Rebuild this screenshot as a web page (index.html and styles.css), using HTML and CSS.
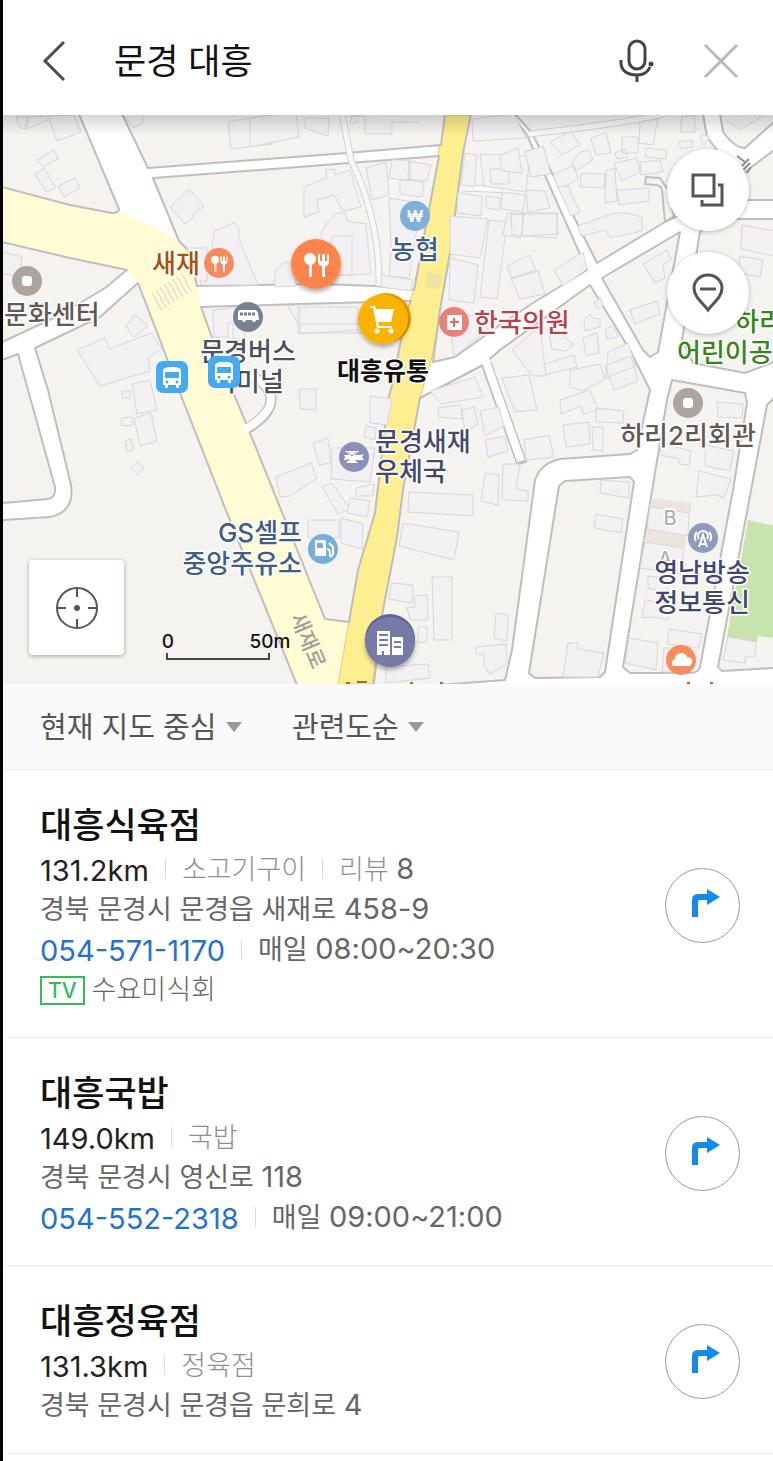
FILE: index.html
```html
<!DOCTYPE html>
<html lang="ko">
  <head>
    <meta charset="UTF-8" />
    <meta name="viewport" content="width=device-width, initial-scale=1.0" />
    <title>문경 대흥 - 지도 검색</title>
    <link rel="stylesheet" href="styles.css">
  </head>
  <body>
    <header class="search-bar">
      <button type="button" class="icon-button" aria-label="뒤로">
        <svg width="24" height="42" viewBox="0 0 24 42"><path d="M23 2L4 21l19 19" fill="none" stroke="#4b4b52" stroke-width="3" /></svg>
      </button>
      <input class="search-input" type="text" aria-label="검색어" value="문경 대흥" />
      <button type="button" class="icon-button" aria-label="음성 검색">
        <svg width="36" height="44" viewBox="0 0 36 44" fill="none" stroke="#444" stroke-width="3">
          <rect x="10" y="2" width="16" height="28" rx="8" />
          <path d="M2 21v3c0 8 7 12 16 12 6 0 11-3 13-8M18 36v7" />
          <circle cx="32" cy="25" r="2.5" fill="#444" stroke="none" />
        </svg>
      </button>
      <button type="button" class="icon-button close" aria-label="지우기">
        <svg width="36" height="36" viewBox="0 0 36 36"><path d="M2 2l32 32M34 2L2 34" fill="none" stroke="#b9b9b9" stroke-width="3" /></svg>
      </button>
    </header>

    <section class="map">
      <svg class="map-canvas" viewBox="3 115 770 569">
        <defs>
          <linearGradient id="topShade" x1="0" y1="0" x2="0" y2="1">
            <stop offset="0" stop-color="#000" stop-opacity=".16" />
            <stop offset="1" stop-color="#000" stop-opacity="0" />
          </linearGradient>
          <filter id="pinShadow" x="-20%" y="-20%" width="140%" height="150%">
            <feDropShadow dx="0" dy="3" stdDeviation="2" flood-opacity=".3" />
          </filter>
          <g id="food">
            <circle cx="-6" cy="-5" r="6" />
            <path d="M-7-2h3v15h-3z" />
            <path d="M2-10h2v7h2v-7h3v7h2v-7h2v7c0 4-2 5-4 5v11H6V2C4 2 2 1 2-3z" />
          </g>
          <g id="busStop">
            <rect x="-16" y="-16" width="32" height="32" rx="7" fill="#46aaf0" />
            <path d="M-9-6c0-3 3-4 9-4s9 1 9 4V8H7v3H4V8H-4v3h-3V8h-2z" fill="#fff" />
            <path d="M-7-5H7V1H-7z" fill="#46aaf0" />
            <circle cx="-5" cy="5" r="1.5" fill="#46aaf0" />
            <circle cx="5" cy="5" r="1.5" fill="#46aaf0" />
          </g>
        </defs>

        <rect x="3" y="115" width="770" height="569" fill="#fff" />

        <!-- 큰 도로 -->
        <path class="road-light" d="M3 187L70 205 112 213 119 211 150 225 179 241 188 250 201 307 220 360 250 433 325 619 349 622 336 684H297L180 393 138 283 127 270 3 242z" />
        <path class="road-main" d="M444 115H471L463 153 450 253 440 310 432 357 420 398 403 490 397 537 383 610 372 684H338L349 622 358 570 375 513 388 400 407 310 415 287 438 157z" />
        <path d="M427 272l15 2-3 15-14-2z" fill="#efe3a0" />
        <path d="M154 298l33-22M158 306l33-21" stroke="#e9e4ce" stroke-width="11" stroke-dasharray="2 3" />

        <!-- 블록 -->
        <g class="block">
          <path d="M2 114H79L119 209Q119 213 112 213L70 205 2 187z" />
          <path d="M122 114L148 168 347 153 441 145 445 114z" />
          <path d="M153 178L260 170 439 156 414 290 375 286 320 284 197 286 193 268 188 250 179 241z" />
          <path d="M201 307L300 304 411 301 407 310 392 385 388 400 375 513 358 570 349 622 325 619 250 433 220 360z" />
          <path d="M2 242L70 258 127 270 105 288 60 315 2 342z" />
          <path d="M138 283L100 317 35 348 48 390 71 485Q75 512 50 517L2 520V685H297L227 513 180 393 160 340z" />
          <path d="M2 360L18 354 28 390 55 487Q56 498 48 499L2 503z" />
          <path d="M471 114H511L527 135 587 270 533 303 500 325 455 357 433 362 440 310 450 253 463 153z" />
          <path d="M420 398L483 365 500 350 590 285 630 350 650 390 637 450 630 454 560 459Q541 463 535 480L512 650 505 680 373 690 383 610 397 537 403 490z" />
          <path d="M515 114H703L707 137 717 150 700 180 680 215 665 222 662 190Q661 185 655 185L645 184 646 177 660 178 668 190 674 216 665 222 597 263 532 133z" />
          <path d="M602 278L680 232 658 352 650 357 643 350z" />
          <path d="M700 232L712 219H774V362L745 373 693 363 682 340z" />
          <path d="M720 114L723 132Q735 148 745 148L774 122V114z" />
          <path d="M774 150L745 172 738 200H774z" />
          <path d="M672 380L745 393 747 403 733 490 700 667Q698 673 690 673H630L623 667 667 400z" />
          <path d="M774 398L767 405 718 667 722 671 774 668z" />
          <path d="M565 481L630 477 634 482 605 672 600 677 535 678 529 673 559 486z" />
        </g>
        <path d="M748 520L774 526V638L758 636 757 642 727 637z" fill="#c7e4ac" />
        <path d="M652 498l40 5-1 10-41-6zM647 530l39 6-1 12-41-7z" fill="#ebe5de" />

        <!-- 골목길 -->
        <g class="alley">
          <path class="edge" d="M486 363L522 464M248 428Q272 414 271 398 269 383 250 376" />
          <path class="fill" d="M485 359L521 461M244 430Q272 414 271 398 269 383 250 376" />
          <path class="edge soft" d="M342 114L351 160Q380 220 379 286M529 134Q620 124 664 114M463 188L510 190" />
          <path class="fill soft" d="M342 114L351 160Q380 220 379 286M529 134Q620 124 664 114M463 188L510 190" />
        </g>

        <!-- 건물 -->
        <g class="building">
          <path d="M16 117l3 10 6 2 2-12zM28 117l-1 12 22-10 8 22 24-9-7-17zM37 160l17-10 4 9-15 8zM35 174l9-6 12 20-10 4zM58 186l17-8 5 10-16 9z" />
          <path d="M125 117l9 11 9-5-1-8M228 122l44-8v30l-41 5zM170 207l19-18 15 17-10 8v3l-9 7zM214 231l20-8 5 6v10l19 46h-57l-3-20h12z" />
          <path d="M187 248h20v33h-8M3 252l19 5-2 19-17-2M126 326l9-12 13 12-14 11zM77 350l28-12 4 11 42-16 11 15-14 10 2 13-50 15zM132 384l18-4 7 30-20 4zM122 391h8v7h-8zM121 418l11-1 1 8-11 1zM134 418l17-5 6 28-17 5zM125 441l6-2 3 11-7 2zM131 468l6-6 7 6-6 7z" />
          <path d="M250 118l46-6 3 25-49 10zM305 118h24l-1 18-23-8zM350 115l15 1v18h27v-12h28M352 116h6v7h-8zM304 187l22-9v-8l9-1v6l15-5 11 37-18 4-9-16-17 5 2 12-15 5z" />
          <path d="M327 223l10-10 8 0 3 8 18 3 5 50-45 2-5-42zM332 236h20v39h-20zM366 168l20-6 3 33-17 5zM392 160h18v21l-21-3zM409 161l22 4-4 16-19-2zM400 179l24 3-2 15-22-3zM389 198l32 5-12 75-20-2 2-25zM381 275l32 5-2 11-30-4zM275 287v-17l10-8 11 2v22z" />
          <path d="M213 310l30-3 2 32h-12v-16h-5v14h-14zM288 306l10-1v19h74v9h-74v-9zM300 307h58v23l-58 4zM299 389h17v21l-16-1zM370 396l22 3-5 26-17-2zM366 426l10 2-1 12-11-3zM313 443l15-5 3 25-12 2zM276 477l35-14 6 15-27 18-10 1zM322 487l10-4 18 26-12 5z" />
          <path d="M332 448l43 0-5 34-39-3zM356 488l18-4-1 12h-17zM350 498l20 3-3 16-20-4zM308 520h31v18h-31zM341 518l22 6-1 25-21-6z" />
          <path d="M472 119l42-5 12 24-53 3zM465 153l12 2-3 32-13-2zM480 154l50 2-4 36-42-6zM490 169h19v15h-18zM458 193l24 3-1 20-24-3zM450 216l38 3-8 39-30-4zM489 220l18 2-10 77-17-2zM450 258l28 7-4 38-25-3z" />
          <path d="M486 196l14 2-1 12-13-2zM502 192l23 3-2 17-22-3zM526 190l19 1 5 17-22 4zM507 213l17 1-3 24-18-3zM523 213l34 0 1 21-36 2zM511 214h46v24l-45-3zM507 266l22-11 7 15-24 8zM511 279l27-8 7 23-25 5zM554 270l29-18 4 17-24 17z" />
          <path d="M450 326l28-14 10 17-34 28zM500 155l18-7 4 25-20-2zM525 152l18-6 8 28-20 3zM550 142l21-11 9 14-18 10zM553 175l21-10 4 14-19 11zM580 152l9-2 4 10-17 11-5-7zM591 138l15-5 5 20-15 2zM615 153l10-4 3 8-11 2zM640 122l18-3-5 26-14-2zM622 137h16v16h-16z" />
          <path d="M581 173l24 1-1 14-24-1zM606 171l9-3 2 33-12 2zM614 163l23-5 3 14-18 9zM640 162l20-2 3 12-22 3zM646 148l21 2-1 9-21-2zM617 190l32-2v13l-30 4zM679 142l13-2 1 7-12 2zM682 116h13v16h-15zM702 134l8 3-6 8-4-6zM558 187l10-1 12 26-9 4zM578 226l36-13 13 0 15 4v14l-32 7-4-8-25 6z" />
          <path d="M643 264l24-14 4 9-8 6 2 13-10 5zM630 310l27-9 3 13-25 10zM594 303l7-5 2 8-6 3zM584 320l6-6 3 4 7 1v8l-15 4zM605 329l9-3 4 11-11 2zM608 352l20-9 8 23-30 12zM583 338l14-5 2 20-13 3zM605 366l26-10 7 25-24 9zM548 328l10 3 16 14-8 6-14-2zM541 365l33-10 3 12-37 9zM570 370l30-6 5 15-22 12-13-4z" />
          <path d="M512 350l28-24 6 50-14 0zM502 378l27-3 8 35-22 2zM430 391l45-14 8 20-42 7zM438 408l23-3 1 14-23-2zM462 410l12-3 4 17-13 9zM480 411l19-4 5 19-19 10zM485 440l20-4 3 15-20 6z" />
          <path d="M409 492l64 3v21l-65-4zM403 523l56 9-5 28-55-14zM432 577h20v63h-18zM391 583l22 2-1 18-23-4zM414 596l13-1 1 25h-18l-3-13h8zM418 627h9v15l-9 1zM496 613l12 2-1 26-13-3zM476 647l30-3 1 20-17 10-6-8v-12h-8zM386 667l42-3 2 14-44 5z" />
          <path d="M485 473l14 2-1 30-17-4zM503 464h17l-4 25 12 2v10l-26-1zM563 425l26-3 1 22-24 3zM592 427h11v24l-10-1zM596 408l28 3-1 12-27-1zM524 440l25-5 5 22-28 3zM560 400l30-10 8 20-15 4-2-8-20 8z" />
          <path d="M601 480l28 2v16l-29-5zM596 514l27 5-2 14-27-5zM568 643h10v6l26 4-6 24-35 0zM717 402l26 2-1 14-24-1zM660 443l31 8-2 14-10-1v-5l-18-4zM699 471l32 8-7 19-8-3-20 2zM705 445l29 6-4 20-25-5zM650 507l39 6-1 23-41-7zM645 542l39 6-4 26-40-6z" />
          <path d="M648 576l20 2v15l-20-5zM645 600l26 4-3 16-13-3-13 1zM629 638l29 5-2 27-31-7zM669 629l33 5-3 14-32-4zM664 648h18v24h-20zM728 637l28 5-1 14-10 1v6l-22-3zM742 225l32 6v25l-33-7zM740 256l23 4-3 17-22-4zM726 120l14 10 23-14" />
        </g>

        <!-- 장소 이름 -->
        <g class="place">
          <text x="152" y="273" fill="#a8500c">새재</text>
          <text x="4" y="324" fill="#5f5955">문화센터</text>
          <text x="415" y="259" fill="#3d5f85" text-anchor="middle">농협</text>
          <text x="474" y="332" fill="#b8414a">한국의원</text>
          <text x="248" y="361" fill="#4c505a" text-anchor="middle">문경버스</text>
          <text x="248" y="391" fill="#4c505a" text-anchor="middle">터미널</text>
          <text x="375" y="451" fill="#45486e">문경새재</text>
          <text x="375" y="481" fill="#45486e">우체국</text>
          <text x="302" y="542" fill="#3d5f85" text-anchor="end">GS셀프</text>
          <text x="302" y="573" fill="#3d5f85" text-anchor="end">중앙주유소</text>
          <text x="688" y="445" fill="#5f5955" text-anchor="middle">하리2리회관</text>
          <text x="735" y="331" fill="#36861b">하리</text>
          <text x="677" y="362" fill="#36861b">어린이공</text>
          <text class="unit" x="670" y="525" text-anchor="middle">B</text>
          <text class="unit" x="665" y="566" text-anchor="middle">A</text>
          <text x="702" y="582" fill="#3f4575" text-anchor="middle">영남방송</text>
          <text x="702" y="612" fill="#3f4575" text-anchor="middle">정보통신</text>
          <text class="chosen" x="383" y="380" text-anchor="middle">대흥유통</text>
        </g>
        <text class="road-name" transform="translate(290 617) rotate(67)">새재로</text>
        <path d="M737 156l8 6M742 166l7-7M743 170l7-7M747 173l4-6" stroke="#8f8f8f" stroke-width="2" />

        <!-- 작은 아이콘 -->
        <g fill="#fff">
          <circle cx="27" cy="281" r="15" fill="#ada49f" />
          <rect x="22" y="276" width="10" height="10" rx="3" />
          <circle cx="688" cy="403" r="15" fill="#ada49f" />
          <rect x="683" y="398" width="10" height="10" rx="3" />

          <circle cx="219" cy="263" r="15" fill="#f58b5c" />
          <use href="#food" transform="translate(219 263) scale(.65)" />

          <circle cx="248" cy="317" r="15" fill="#78818f" />
          <path d="M238 312q0-2 2-2h15q2 0 3 3l1 7h-3a2 2 0 0 1-4 0h-6a2 2 0 0 1-4 0h-4z" />
          <path d="M240 314h16" stroke="#78818f" stroke-width="3" stroke-dasharray="3 1" />

          <circle cx="415" cy="216" r="15" fill="#7fb0dc" />
          <text class="won" x="415" y="222" text-anchor="middle">₩</text>

          <circle cx="454" cy="322" r="15" fill="#e98079" />
          <rect x="447" y="315" width="15" height="15" rx="1" />
          <path d="M454 318v9M450 322h9" stroke="#e06c66" stroke-width="2" />

          <circle cx="354" cy="457" r="15" fill="#8c8fb6" />
          <path d="M345 451h14l-4 4h5l4-1-2 3 2 3-5 0h-4l3 3h-12l4-4-6 1 1-3-1-2 5 0z" />
          <path d="M347 452l5 4 5-4" fill="none" stroke="#8c8fb6" stroke-width="1" />

          <circle cx="323" cy="549" r="15" fill="#75afd9" />
          <path d="M315 541q0-1 2-1h7q2 0 2 2v14h-11zM317 543v5h6v-5z" fill-rule="evenodd" />
          <path d="M327 549q3 0 3 5t3 0v-7l-4-4" fill="none" stroke="#fff" stroke-width="2" />

          <circle cx="703" cy="538" r="15" fill="#8f9ac0" />
          <path d="M699 547l4-12 4 12M700 544h6M699 539a5 5 0 1 1 8 0M696 541a8 8 0 0 1 1-9M710 541a8 8 0 0 0-1-9" fill="none" stroke="#fff" stroke-width="2" />

          <circle cx="681" cy="660" r="15" fill="#f68d5b" />
          <path d="M673 666q-3-5 2-7 0-5 6-6 5 0 6 4 6 0 5 6-1 3-4 3z" />
        </g>
        <use href="#busStop" x="172" y="377" />
        <use href="#busStop" x="224" y="372" />

        <!-- 검색 결과 핀 -->
        <g fill="#fff">
          <circle cx="316" cy="264" r="25" fill="#ff844c" filter="url(#pinShadow)" />
          <use href="#food" x="316" y="264" />

          <circle cx="386" cy="318" r="25" fill="#e29c00" />
          <circle cx="383" cy="319" r="25" fill="#fcb300" filter="url(#pinShadow)" />
          <path d="M370 306h5l1 3h18l-3 13h-13l1 4h13v2h-15l-4-20h-3z" />
          <circle cx="377" cy="331" r="2.5" />
          <circle cx="391" cy="331" r="2.5" />

          <circle cx="390" cy="639" r="25" fill="#626694" />
          <circle cx="390" cy="642" r="25" fill="#757aa6" filter="url(#pinShadow)" />
          <path d="M377 631h13v24h-13zM392 637h11v18h-11z" />
          <path d="M379 635h9M379 640h9M379 645h9M394 642h7M394 647h7M383 655v-4" stroke="#757aa6" stroke-width="2" />
        </g>
        <path d="M346 683h4M357 682h10M410 683h3M440 683h3M687 683h3M710 683h3" stroke="#a06a34" stroke-width="2" />

        <!-- 축척 -->
        <g class="scale">
          <text x="168" y="648" text-anchor="middle">0</text>
          <text x="270" y="648" text-anchor="middle">50m</text>
          <path d="M167 653v6h102v-6" />
        </g>
        <rect x="3" y="115" width="770" height="20" fill="url(#topShade)" />
      </svg>

      <div class="map-tools">
        <button type="button" class="round-button" aria-label="지도 유형">
          <svg width="34" height="34" viewBox="0 0 34 34" fill="none" stroke="#555" stroke-width="3"><path d="M2 2h21v21H2zM27 12h4v20H11v-5" /></svg>
        </button>
        <button type="button" class="round-button" aria-label="핀 숨기기">
          <svg width="34" height="40" viewBox="0 0 34 40" fill="none" stroke="#555" stroke-width="3"><path d="M17 37C12 30 3 24 3 15a14 13 0 0 1 28 0c0 9-9 15-14 22zM9 16h16" /></svg>
        </button>
      </div>
      <button type="button" class="locate-button" aria-label="현재 위치">
        <svg width="44" height="44" viewBox="0 0 44 44" fill="none" stroke="#555" stroke-width="2">
          <circle cx="22" cy="22" r="20" />
          <path d="M22 2v9M22 33v9M2 22h9M33 22h9" />
          <circle cx="22" cy="22" r="3" fill="#555" stroke="none" />
        </svg>
      </button>
    </section>

    <form class="filters">
      <div class="filter">
        <select aria-label="검색 기준">
          <option>현재 지도 중심</option>
        </select>
      </div>
      <div class="filter">
        <select aria-label="정렬">
          <option>관련도순</option>
        </select>
      </div>
    </form>

    <ul class="results">
      <li class="result">
        <div class="info">
          <h2>대흥식육점</h2>
          <p class="line"><span class="distance num">131.2km</span><span class="category">소고기구이</span><span class="category">리뷰 <b class="num">8</b></span></p>
          <p>경북 문경시 문경읍 새재로 <span class="num">458-9</span></p>
          <p class="line"><a class="num" href="tel:054-571-1170">054-571-1170</a><span>매일 <span class="num">08:00~20:30</span></span></p>
          <p class="tv"><em>TV</em>수요미식회</p>
        </div>
        <button type="button" class="route-button" aria-label="대흥식육점 길찾기">
          <svg width="34" height="32" viewBox="-6 0 34 32" fill="#128af0"><path d="M0 28V11q0-6 6-6h9V0l13 8-13 8v-5H8q-2 0-2 2v15z" /></svg>
        </button>
      </li>
      <li class="result">
        <div class="info">
          <h2>대흥국밥</h2>
          <p class="line"><span class="distance num">149.0km</span><span class="category">국밥</span></p>
          <p>경북 문경시 영신로 <span class="num">118</span></p>
          <p class="line"><a class="num" href="tel:054-552-2318">054-552-2318</a><span>매일 <span class="num">09:00~21:00</span></span></p>
        </div>
        <button type="button" class="route-button" aria-label="대흥국밥 길찾기">
          <svg width="34" height="32" viewBox="-6 0 34 32" fill="#128af0"><path d="M0 28V11q0-6 6-6h9V0l13 8-13 8v-5H8q-2 0-2 2v15z" /></svg>
        </button>
      </li>
      <li class="result">
        <div class="info">
          <h2>대흥정육점</h2>
          <p class="line"><span class="distance num">131.3km</span><span class="category">정육점</span></p>
          <p>경북 문경시 문경읍 문희로 <span class="num">4</span></p>
        </div>
        <button type="button" class="route-button" aria-label="대흥정육점 길찾기">
          <svg width="34" height="32" viewBox="-6 0 34 32" fill="#128af0"><path d="M0 28V11q0-6 6-6h9V0l13 8-13 8v-5H8q-2 0-2 2v15z" /></svg>
        </button>
      </li>
    </ul>
  </body>
</html>
```
FILE: styles.css
```css
* {
  box-sizing: border-box;
}
body {
  margin: 0;
  min-height: 100vh;
  border-left: 3px solid #000;
  background-color: #fff;
  color: #666;
  font-family: Inter, "Noto Sans CJK KR", sans-serif;
  font-size: 27px;
}
button, input, select {
  font-family: inherit;
  border: none;
  padding: 0;
  background: none;
}
button {
  display: flex;
  justify-content: center;
  align-items: center;
  flex-shrink: 0;
  cursor: pointer;
}
svg {
  display: block;
}

/* 검색창 */
.search-bar {
  display: flex;
  align-items: center;
  height: 115px;
  padding: 6px 34px 0 38px;
}
.search-input {
  flex: 1;
  min-width: 0;
  margin-left: 49px;
  height: 60px;
  padding-bottom: 4px;
  color: #111;
  font-size: 35px;
}
.icon-button.close {
  margin-left: 48px;
}

/* 지도 */
.map {
  position: relative;
}
.map-canvas {
  width: 100%;
  height: auto;
}
.road-light {
  fill: #fffcd5;
}
.road-main {
  fill: #fdee90;
  stroke: #edc86a;
  stroke-width: 1;
}
.block {
  fill: #f5f3ef;
  stroke: #c2bdbc;
  stroke-width: 2;
  stroke-linejoin: round;
}
.alley {
  fill: none;
}
.edge {
  stroke: #c2bdbc;
  stroke-width: 11;
}
.alley .fill {
  stroke: #fff;
  stroke-width: 8;
}
.edge.soft {
  stroke: #d5d1d2;
  stroke-width: 7;
}
.alley .fill.soft {
  stroke: #f8f7f5;
  stroke-width: 5;
}
.building {
  fill: #f2f0f2;
  stroke: #d9d6d8;
  stroke-width: 1;
}
.place text {
  font-size: 26px;
  font-weight: 500;
  paint-order: stroke;
  stroke: #fff;
  stroke-width: 3px;
  stroke-linejoin: round;
}
.place .chosen {
  fill: #111;
  font-size: 25px;
  font-weight: 700;
}
.place .unit {
  fill: #b3aeb0;
  font-size: 20px;
}
.road-name {
  fill: #a29f98;
  font-size: 21px;
  font-weight: 500;
}
.won {
  font-size: 16px;
  font-weight: 700;
}
.scale text {
  fill: #111;
  font-size: 19px;
  font-weight: 500;
}
.scale path {
  fill: none;
  stroke: #444;
  stroke-width: 2;
}
.map-tools {
  position: absolute;
  top: 34px;
  right: 24px;
  display: flex;
  flex-direction: column;
  gap: 21px;
}
.round-button {
  width: 82px;
  height: 82px;
  border-radius: 50%;
  background-color: #fff;
  box-shadow: 0 1px 5px rgba(0, 0, 0, 0.25);
}
.locate-button {
  position: absolute;
  left: 26px;
  bottom: 29px;
  width: 95px;
  height: 95px;
  border-radius: 4px;
  background-color: #fff;
  box-shadow: 0 1px 4px rgba(0, 0, 0, 0.35);
}

/* 정렬 */
.filters {
  display: flex;
  gap: 50px;
  padding: 16px 37px 15px;
  border-bottom: 1px solid #e9e9e9;
  background-color: #fafafa;
}
.filter {
  position: relative;
}
.filter select {
  appearance: none;
  height: 54px;
  padding-right: 25px;
  color: #555;
  font-size: 29px;
}
.filter::after {
  content: "";
  position: absolute;
  top: 22px;
  right: 0;
  border: 8px solid transparent;
  border-top: 10px solid #999;
  border-bottom: 0;
  pointer-events: none;
}

/* 검색 결과 */
.results {
  margin: 0;
  padding: 0;
  list-style: none;
}
.result {
  display: flex;
  justify-content: space-between;
  align-items: center;
  padding: 30px 33px 27px 37px;
  border-bottom: 1px solid #ededed;
}
.result h2 {
  margin: 0;
  color: #111;
  font-size: 35px;
  font-weight: 500;
  line-height: 50px;
}
.result p {
  margin: 0;
  line-height: 40px;
}
.num {
  font-size: 29px;
  line-height: 1;
}
.line {
  display: flex;
  align-items: center;
}
.line > * + *::before {
  content: "";
  display: inline-block;
  width: 1px;
  height: 20px;
  margin: 0 16px;
  background-color: #ddd;
}
.distance {
  color: #222;
}
.category {
  color: #8f8f8f;
  font-weight: 300;
}
.category b {
  color: #666;
  font-weight: 400;
}
.result a {
  color: #1f72d2;
  text-decoration: none;
}
.result .tv {
  display: flex;
  align-items: center;
  gap: 7px;
  font-weight: 300;
}
.tv em {
  padding: 0 6px;
  border: 2px solid #35b95c;
  color: #35b95c;
  font-size: 21px;
  font-style: normal;
  font-weight: 500;
  line-height: 25px;
}
.route-button {
  width: 75px;
  height: 75px;
  border: 1px solid #999;
  border-radius: 50%;
}
```
